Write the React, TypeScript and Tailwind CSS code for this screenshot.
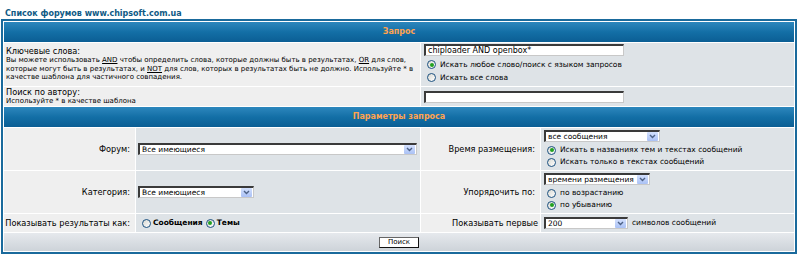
function Radio({ checked, className = "ml-[3px] mr-[4px]" }: { checked?: boolean; className?: string }) {
  return (
    <span
      className={`inline-flex size-[9px] shrink-0 items-center justify-center rounded-full border border-[#1c5180] bg-gradient-to-br from-[#d8d8d2] to-white ${className}`}
    >
      {checked && <span className="size-[4px] rounded-full bg-[#21a121]" />}
    </span>
  );
}

function Select({ value, width }: { value: string; width: string }) {
  return (
    <div
      className={`flex h-[12px] items-center border-t-2 border-l-2 border-r border-b border-t-[#3a3a3a] border-l-[#3a3a3a] border-r-[#c8c8c8] border-b-[#c8c8c8] bg-white ${width}`}
    >
      <span className="flex-1 whitespace-nowrap pl-[2px] text-[7.5px] leading-none">{value}</span>
      <span className="mr-px flex h-[9px] w-[11px] items-center justify-center rounded-[1px] bg-gradient-to-b from-[#d3e0fd] to-[#aac1f5]">
        <svg width="7" height="5" viewBox="0 0 7 5">
          <path d="M1 1 L3.5 3.5 L6 1" fill="none" stroke="#4d6185" strokeWidth="1.4" />
        </svg>
      </span>
    </div>
  );
}

function TextInput({ value }: { value?: string }) {
  return (
    <div className="flex h-[12px] w-[200px] items-center border-t-2 border-l-2 border-r border-b border-t-[#3a3a3a] border-l-[#3a3a3a] border-r-[#c8c8c8] border-b-[#c8c8c8] bg-white pl-[2px] text-[8px] leading-none">
      {value}
    </div>
  );
}

function Head({ children }: { children: string }) {
  return (
    <div className="col-span-4 flex items-center justify-center bg-gradient-to-b from-[#2c87bd] via-[#136fa6] to-[#0b5e94] text-[8px] font-bold text-[#ffa34f]">
      {children}
    </div>
  );
}

export default function App() {
  return (
    <div className="h-[258px] w-[800px] bg-white font-['DejaVu_Sans',Verdana,sans-serif] text-black">
      <div className="h-[19px] pl-[5px] pt-[9px] text-[8px] font-bold leading-[10px] text-[#0f5a85]">
        Список форумов www.chipsoft.com.ua
      </div>
      <div className="ml-px w-[796px] border-2 border-[#1a6a9c] bg-white p-px">
        <div className="grid grid-cols-[131px_284px_119px_253px] grid-rows-[20px_43px_19px_20px_42px_42px_18px_18px] gap-px">
          <Head>Запрос</Head>

          <div className="col-span-2 overflow-hidden bg-[#efefef] pl-[2px] pt-[4px]">
            <div className="text-[8.2px] leading-[9px]">Ключевые слова:</div>
            <div className="whitespace-nowrap text-[7px] leading-[8.5px]">
              Вы можете использовать <u>AND</u> чтобы определить слова, которые должны быть в результатах, <u>OR</u> для слов,
              <br />
              которые могут быть в результатах, и <u>NOT</u> для слов, которых в результатах быть не должно. Используйте * в
              <br />
              качестве шаблона для частичного совпадения.
            </div>
          </div>
          <div className="col-span-2 bg-[#dee3e7] pl-[3px] pt-px">
            <TextInput value="chiploader AND openbox*" />
            <div className="mt-[2px] flex h-[13px] items-center text-[7.5px]">
              <Radio checked />
              Искать любое слово/поиск с языком запросов
            </div>
            <div className="flex h-[13px] items-center text-[7.5px]">
              <Radio />
              Искать все слова
            </div>
          </div>

          <div className="col-span-2 bg-[#efefef] pl-[2px] pt-px">
            <div className="text-[8.2px] leading-[9px]">Поиск по автору:</div>
            <div className="text-[7px] leading-[8px]">Используйте * в качестве шаблона</div>
          </div>
          <div className="col-span-2 flex items-center bg-[#dee3e7] pl-[3px]">
            <TextInput />
          </div>

          <Head>Параметры запроса</Head>

          <div className="flex items-center justify-end bg-[#efefef] pr-[5px] text-[8.2px]">Форум:</div>
          <div className="flex items-center bg-[#dee3e7] pl-[2px]">
            <Select value="Все имеющиеся" width="w-[279px]" />
          </div>
          <div className="flex items-center justify-end whitespace-nowrap bg-[#efefef] pr-[5px] text-[8.2px]">
            Время размещения:
          </div>
          <div className="bg-[#dee3e7] pl-[3px] pt-[2px]">
            <Select value="все сообщения" width="w-[116px]" />
            <div className="mt-[2px] flex h-[12px] items-center text-[7.5px]">
              <Radio checked />
              Искать в названиях тем и текстах сообщений
            </div>
            <div className="flex h-[12px] items-center text-[7.5px]">
              <Radio />
              Искать только в текстах сообщений
            </div>
          </div>

          <div className="flex items-center justify-end bg-[#efefef] pr-[5px] text-[8.2px]">Категория:</div>
          <div className="flex items-center bg-[#dee3e7] pl-[2px]">
            <Select value="Все имеющиеся" width="w-[116px]" />
          </div>
          <div className="flex items-center justify-end whitespace-nowrap bg-[#efefef] pr-[5px] text-[8.2px]">
            Упорядочить по:
          </div>
          <div className="bg-[#dee3e7] pl-[3px] pt-[2px]">
            <Select value="времени размещения" width="w-[106px]" />
            <div className="mt-[2px] flex h-[12px] items-center text-[7.5px]">
              <Radio />
              по возрастанию
            </div>
            <div className="flex h-[12px] items-center text-[7.5px]">
              <Radio checked />
              по убыванию
            </div>
          </div>

          <div className="flex items-center justify-end whitespace-nowrap bg-[#efefef] pr-[5px] text-[8.2px]">
            Показывать результаты как:
          </div>
          <div className="flex items-center whitespace-nowrap bg-[#dee3e7] pl-[2px] text-[7.5px] font-bold">
            <Radio className="ml-[4px] mr-[2px]" />
            Сообщения
            <Radio checked className="ml-[3px] mr-[2px]" />
            Темы
          </div>
          <div className="flex items-center justify-end whitespace-nowrap bg-[#efefef] pr-[2px] text-[8.2px]">
            Показывать первые
          </div>
          <div className="flex items-center gap-[4px] whitespace-nowrap bg-[#dee3e7] pl-[3px] text-[7.5px]">
            <Select value="200" width="w-[84px]" />
            символов сообщений
          </div>

          <div className="col-span-4 flex items-center justify-center bg-gradient-to-b from-[#e6e9ed] to-[#cdd3d9]">
            <button className="flex h-[11px] w-[40px] items-center justify-center border border-[#666] border-b-[#111] border-r-[#111] bg-white text-[7px] leading-none">
              Поиск
            </button>
          </div>
        </div>
      </div>
    </div>
  );
}
